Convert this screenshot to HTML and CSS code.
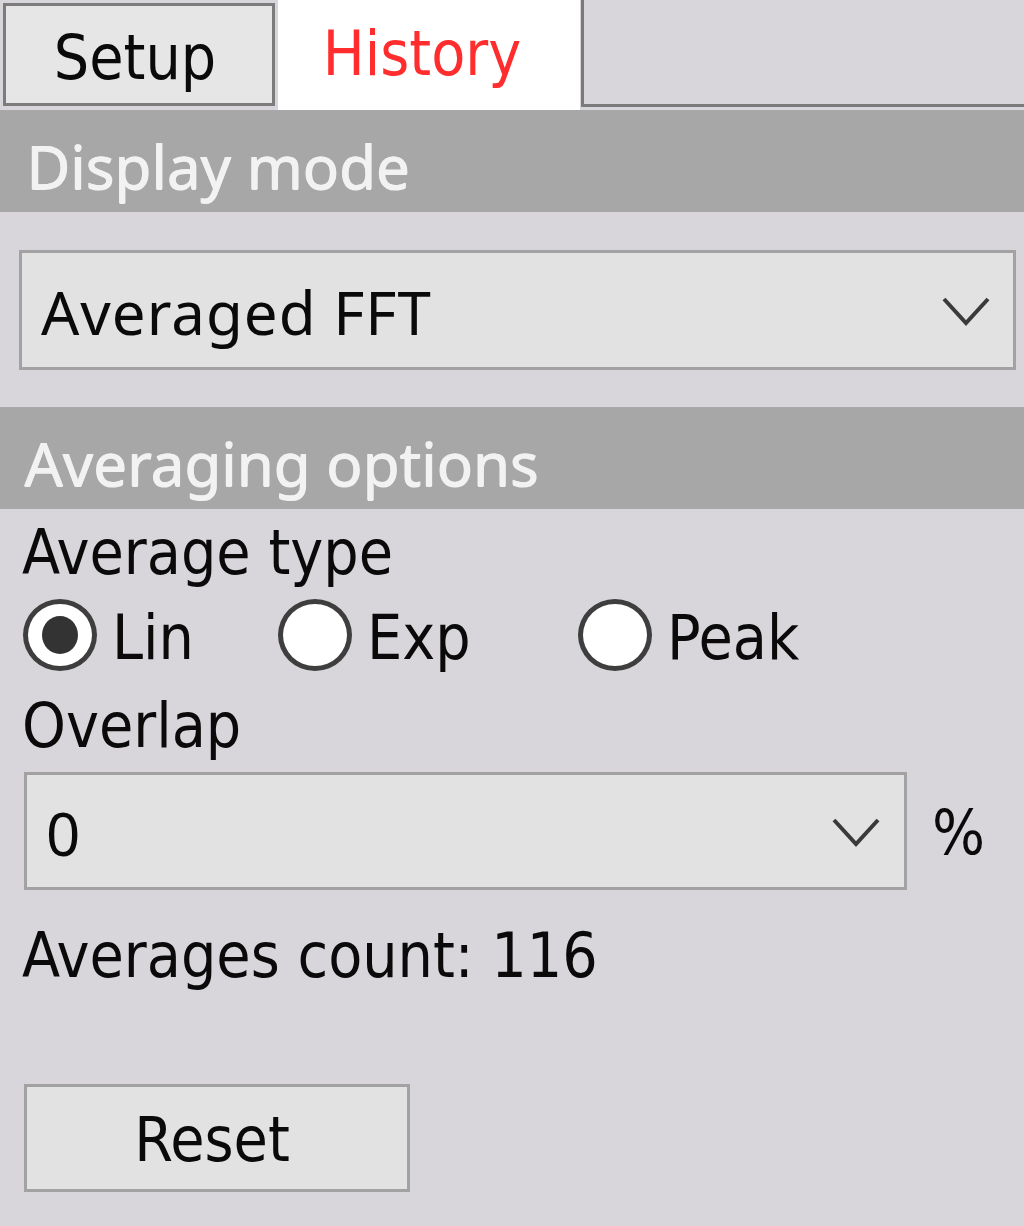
FILE: index.html
```html
<!DOCTYPE html>
<html>
<head>
<meta charset="utf-8">
<link rel="stylesheet" href="styles.css">
</head>
<body>
<div class="panel">
  <div class="tabs">
    <div class="tab tab-setup">Setup</div>
    <div class="tab tab-history">History</div>
    <div class="tab-rest"></div>
  </div>

  <div class="section-header">Display mode</div>

  <div class="combo combo-mode">
    <span class="combo-text">Averaged FFT</span>
    <svg class="chevron" width="48" height="30" viewBox="0 0 48 30"><polyline points="2,3 24,27 46,3" fill="none" stroke="#3a3a3a" stroke-width="4"/></svg>
  </div>

  <div class="section-header header-avg">Averaging options</div>

  <div class="content">
    <div class="label label-type">Average type</div>
    <div class="radio-row">
      <div class="radio-item item-lin"><span class="radio checked"><span class="dot"></span></span><span class="radio-label">Lin</span></div>
      <div class="radio-item item-exp"><span class="radio"></span><span class="radio-label">Exp</span></div>
      <div class="radio-item item-peak"><span class="radio"></span><span class="radio-label">Peak</span></div>
    </div>
    <div class="label label-overlap">Overlap</div>
    <div class="overlap-row">
      <div class="combo combo-overlap">
        <span class="combo-text">0</span>
        <svg class="chevron" width="48" height="30" viewBox="0 0 48 30"><polyline points="2,3 24,27 46,3" fill="none" stroke="#3a3a3a" stroke-width="4"/></svg>
      </div>
      <span class="unit">%</span>
    </div>
    <div class="label label-count">Averages count: 116</div>
    <div class="button">Reset</div>
  </div>
</div>
</body>
</html>
```

FILE: styles.css
```css
html, body {
  margin: 0;
  padding: 0;
}
body {
  width: 1024px;
  height: 1226px;
  overflow: hidden;
  background: #d8d6da;
  color: #0a0a0a;
}
.panel {
  display: flex;
  flex-direction: column;
}

/* Tahoma-like text */
.tab, .label, .radio-label, .unit, .button {
  font-family: "DejaVu Sans Condensed", "DejaVu Sans", sans-serif;
  font-stretch: condensed;
  font-size: 62px;
}

/* Segoe-like text */
.section-header, .combo-text {
  font-family: "Noto Sans", "Open Sans", sans-serif;
  font-size: 60px;
}

.tabs {
  display: flex;
  height: 110px;
  align-items: flex-start;
}
.tab {
  box-sizing: border-box;
  text-align: center;
}
.tab-setup {
  margin-top: 3px;
  margin-left: 3px;
  width: 272px;
  height: 103px;
  border: 3px solid #7c7c7c;
  background: #e6e6e6;
  padding-top: 6px;
  line-height: 91px;
  padding-right: 8px;
}
.tab-history {
  margin-left: 3px;
  width: 302px;
  height: 110px;
  background: #ffffff;
  color: #ff2d2d;
  line-height: 107px;
  padding-right: 14px;
}
.tab-rest {
  flex: 1;
  box-sizing: border-box;
  height: 107px;
  margin-left: 1px;
  border-left: 3px solid #7a7a7a;
  border-bottom: 3px solid #7a7a7a;
  background: #d8d6da;
}

.section-header {
  box-sizing: border-box;
  height: 102px;
  padding-top: 10px;
  padding-left: 26px;
  line-height: 92px;
  background: #a7a7a7;
  color: #f2f2f2;
  text-shadow: 1px 0 0 #f2f2f2, 0.5px 0.5px 0 #f2f2f2;
  white-space: nowrap;
}
.header-avg {
  margin-top: 37px;
  padding-left: 24px;
}

.combo {
  box-sizing: border-box;
  display: flex;
  align-items: center;
  justify-content: space-between;
  border: 3px solid #a2a2a2;
  background: #e2e2e2;
}
.combo-mode {
  margin-top: 38px;
  margin-left: 19px;
  width: 997px;
  height: 120px;
  padding-left: 19px;
  padding-right: 23px;
}
.combo-text {
  padding-top: 4px;
  line-height: 110px;
  letter-spacing: 1px;
}
.chevron {
  display: block;
  margin-top: 2px;
}

.content {
  display: flex;
  flex-direction: column;
  padding-left: 22px;
}
.label {
  white-space: nowrap;
}
.label-type {
  height: 87px;
  line-height: 87px;
}
.radio-row {
  display: flex;
  height: 83px;
  align-items: center;
  padding-left: 1px;
}
.radio-item {
  display: flex;
  align-items: center;
}
.item-lin { width: 255px; }
.item-exp { width: 300px; }
.radio {
  box-sizing: border-box;
  width: 74px;
  height: 72px;
  border-radius: 50%;
  border: 5px solid #3e3e3e;
  background: #ffffff;
  display: flex;
  align-items: center;
  justify-content: center;
  margin-right: 15px;
  margin-bottom: 6px;
}
.dot {
  width: 36px;
  height: 38px;
  border-radius: 50%;
  background: #333333;
}
.radio-label {
  line-height: 83px;
}
.label-overlap {
  height: 93px;
  line-height: 93px;
}
.overlap-row {
  display: flex;
  align-items: center;
}
.combo-overlap {
  margin-left: 2px;
  width: 883px;
  height: 118px;
  padding-left: 19px;
  padding-right: 24px;
}
.combo-overlap .combo-text {
  line-height: 108px;
}
.unit {
  margin-left: 25px;
  line-height: 108px;
  padding-top: 4px;
}
.label-count {
  height: 131px;
  line-height: 131px;
}
.button {
  box-sizing: border-box;
  margin-top: 63px;
  margin-left: 2px;
  width: 386px;
  height: 108px;
  border: 3px solid #a2a2a2;
  background: #e2e2e2;
  text-align: center;
  padding-top: 3px;
  line-height: 99px;
  padding-right: 10px;
}
```
